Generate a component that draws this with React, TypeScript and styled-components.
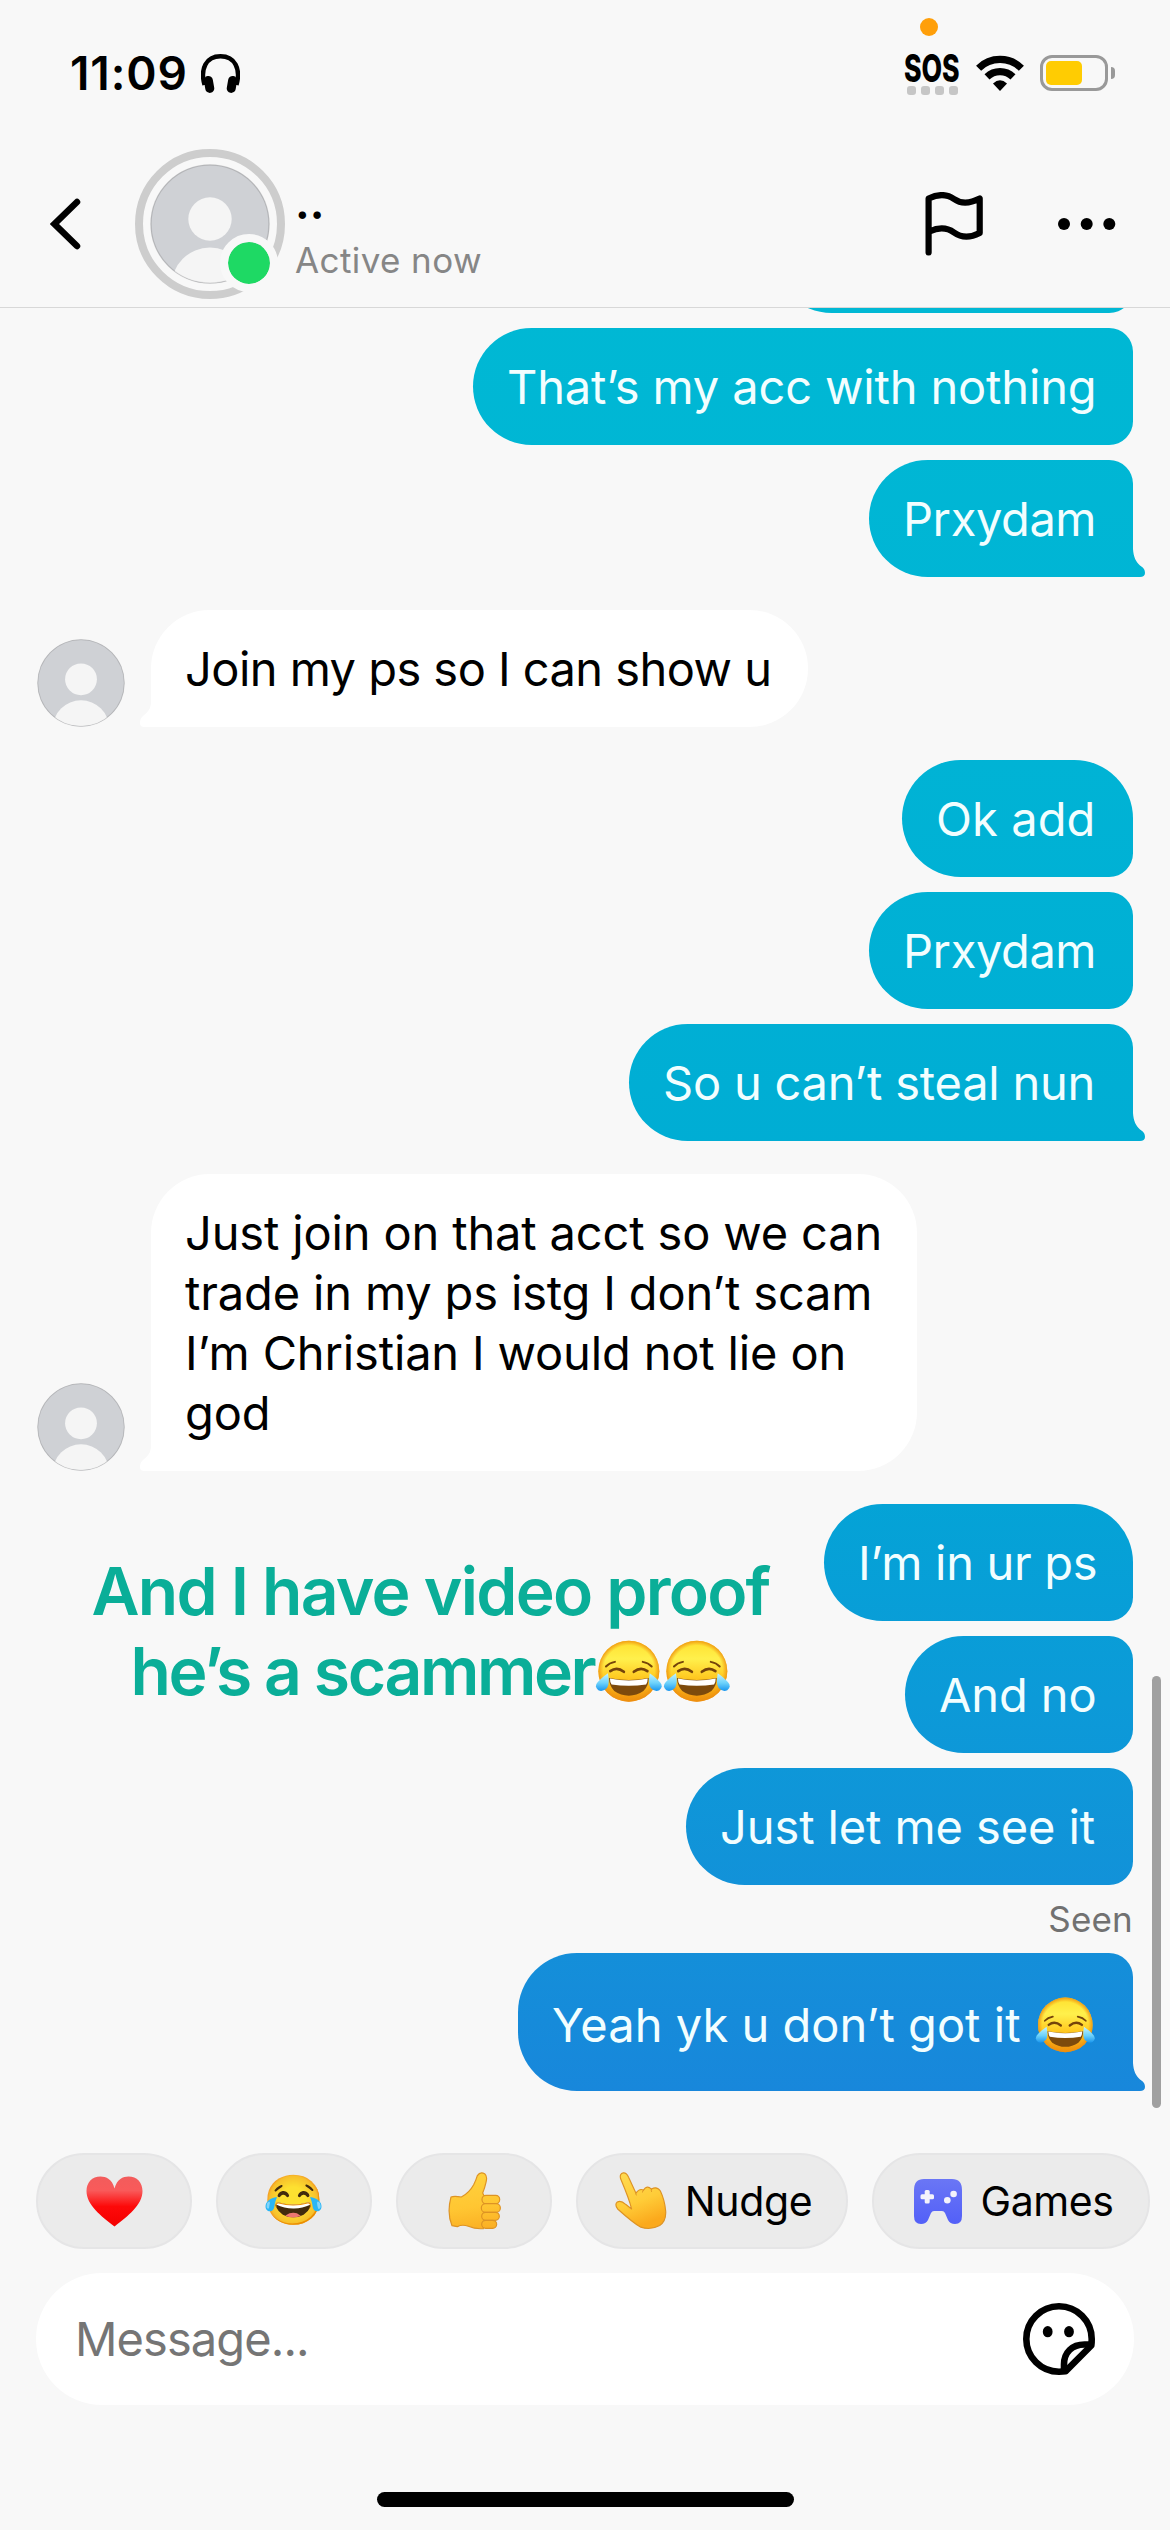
import React, { useId } from "react";
import styled, { createGlobalStyle, css } from "styled-components";

const GlobalStyle = createGlobalStyle`
  *, *::before, *::after { box-sizing: border-box; }
  body { margin: 0; background: #f8f8f8; }
`;

const Screen = styled.main`
  width: 1170px;
  height: 2530px;
  display: flex;
  flex-direction: column;
  overflow: hidden;
  background: #f8f8f8;
  color: #000;
  font-family: Inter, "Liberation Sans", sans-serif;
`;

/* ---------- status bar ---------- */

const StatusBar = styled.div`
  position: relative;
  flex: none;
  height: 148px;
  padding: 0 55px 2px 70px;
  display: flex;
  align-items: center;
  justify-content: space-between;
`;

const StatusGroup = styled.div<{ $gap: number }>`
  display: flex;
  align-items: center;
  gap: ${(p) => p.$gap}px;
`;

const Clock = styled.span`
  font-size: 46px;
  font-weight: 600;
  letter-spacing: 0.9px;
  line-height: 56px;
`;

const MicDot = styled.i`
  position: absolute;
  left: 920px;
  top: 18px;
  width: 18px;
  height: 18px;
  border-radius: 50%;
  background: #ff9f0a;
`;

const Sos = styled.div`
  width: 56px;
  display: flex;
  flex-direction: column;
  align-items: center;
  gap: 4px;
  padding-top: 2px;
`;

const SosText = styled.span`
  font-size: 38px;
  font-weight: 800;
  line-height: 28px;
  transform: scaleX(0.7);
`;

const SosBars = styled.div`
  display: flex;
  gap: 5px;
  i {
    width: 9px;
    height: 9px;
    border-radius: 3px;
    background: #c6c6c6;
  }
`;

const Battery = styled.div`
  display: flex;
  align-items: center;
  gap: 3px;
`;

const BatteryBody = styled.div`
  width: 68px;
  height: 36px;
  padding: 3px;
  border: 3px solid #999;
  border-radius: 12px;
`;

const BatteryFill = styled.div`
  width: 36px;
  height: 24px;
  border-radius: 5px;
  background: #ffcc02;
`;

const BatteryCap = styled.div`
  width: 4px;
  height: 12px;
  border-radius: 0 4px 4px 0;
  background: #999;
`;

/* ---------- header ---------- */

const Header = styled.header`
  flex: none;
  height: 160px;
  padding: 0 54px 7px 50px;
  display: flex;
  align-items: center;
  border-bottom: 1px solid #d8d8d8;
`;

const Back = styled.button`
  width: 85px;
  height: 52px;
  padding: 0;
  border: 0;
  background: none;
  display: flex;
`;

const Contact = styled.div`
  flex: 1;
  padding: 15px 0 0 10px;
  display: flex;
  flex-direction: column;
  gap: 11px;
`;

const ContactName = styled.strong`
  font-size: 44px;
  font-weight: 700;
  line-height: 50px;
  margin-top: -4px;
`;

const ContactState = styled.span`
  font-size: 35px;
  line-height: 42px;
  letter-spacing: 0.4px;
  color: #868686;
`;

const HeaderActions = styled.div`
  display: flex;
  align-items: center;
  gap: 73px;
`;

/* ---------- conversation ---------- */

const Conversation = styled.section`
  position: relative;
  flex: none;
  height: 1822px;
  padding: 0 37px 39px 37px;
  overflow: hidden;
  display: flex;
  flex-direction: column;
  justify-content: flex-end;
  gap: 33px;
`;

const Group = styled.div`
  flex: none;
  display: flex;
  flex-direction: column;
  align-items: flex-end;
  gap: 15px;
`;

const IncomingRow = styled.div`
  flex: none;
  display: flex;
  align-items: flex-end;
  gap: 26px;
`;

const outgoingFill = css`
  background: linear-gradient(
      to bottom,
      #00b8d4 300px,
      #00b4d5 700px,
      #00add4 1150px,
      #03a4d6 1480px,
      #0c9ad8 1700px,
      #148fd9 1950px,
      #1887db 2091px
    )
    fixed;
`;

const Bubble = styled.div<{ $width: number; $first?: boolean; $tail?: boolean; $tracking?: number }>`
  position: relative;
  width: ${(p) => p.$width}px;
  padding: 28.5px 0 28.5px 34px;
  font-size: 47px;
  line-height: 60px;
  letter-spacing: ${(p) => p.$tracking ?? 0}px;
  white-space: pre;
`;

const Outgoing = styled(Bubble)`
  ${outgoingFill}
  color: #f2feff;
  border-radius: 59px ${(p) => (p.$first ? 59 : 24)}px ${(p) => (p.$tail ? 0 : 24)}px 59px;
  ${(p) =>
    p.$tail &&
    css`
      &::after {
        content: "";
        position: absolute;
        right: -12px;
        bottom: 0;
        width: 15px;
        height: 30px;
        ${outgoingFill}
        clip-path: path("M0 0 L3 2 C3.5 10 6 15 10 18.5 C14 21 15 23 15 26 C15 28.500 13 30 10 30 L0 30 Z");
      }
    `}
`;

const Incoming = styled(Bubble)`
  background: #fff;
  border-radius: 59px 59px 59px 0;
  &::after {
    content: "";
    position: absolute;
    left: -11px;
    bottom: 0;
    width: 12px;
    height: 27px;
    background: #fff;
    clip-path: path("M12 0 L11 3 C10.500 9 8 12 3 16 C0 18.500 0 21 0 23.500 C0 26 2 27 4 27 L12 27 Z");
  }
`;

const EmojiBubble = styled(Outgoing)`
  height: 138px;
  padding: 42px 38px 0 34px;
  display: flex;
  align-items: flex-start;
  justify-content: space-between;
  svg { margin-top: 2px; }
`;

const Seen = styled.div`
  height: 38px;
  font-size: 35px;
  line-height: 38px;
  letter-spacing: 0.2px;
  color: #717171;
`;

const Caption = styled.div`
  position: absolute;
  left: 60px;
  top: 1243px;
  width: 741px;
  display: flex;
  flex-direction: column;
  align-items: center;
  color: #0aae98;
  font-size: 66px;
  font-weight: 600;
  line-height: 80px;
  white-space: nowrap;
`;

const CaptionLine = styled.div<{ $tracking: number }>`
  display: flex;
  align-items: center;
  letter-spacing: ${(p) => p.$tracking}px;
  svg { margin: 0 0 0 1px; }
`;

const ScrollThumb = styled.div`
  position: absolute;
  right: 9px;
  top: 1368px;
  width: 9px;
  height: 432px;
  border-radius: 5px;
  background: #a0a0a0;
`;

/* ---------- quick replies and composer ---------- */

const QuickReplies = styled.nav`
  flex: none;
  display: flex;
  gap: 24px;
  padding: 23px 0 24px 36px;
`;

const Chip = styled.button<{ $width: number; $inset?: number }>`
  flex: none;
  width: ${(p) => p.$width}px;
  height: 96px;
  padding: 0 0 0 ${(p) => p.$inset ?? 0}px;
  display: flex;
  align-items: center;
  justify-content: center;
  gap: 18px;
  border: 2px solid #e5e5e6;
  border-radius: 48px;
  background: #ebebeb;
  color: #000;
  font: 400 41px Inter, sans-serif;
  letter-spacing: -0.4px;
`;

const EmojiGlyph = styled.span`
  font: 49px "Noto Color Emoji", sans-serif;
  line-height: 60px;
`;

const Composer = styled.div`
  flex: none;
  height: 132px;
  margin: 0 36px;
  padding: 0 39px 0 39px;
  display: flex;
  align-items: center;
  justify-content: space-between;
  border-radius: 66px;
  background: #fff;
  color: #757575;
  font-size: 47px;
  letter-spacing: -0.9px;
  span { margin-top: -2px; }
`;

const HomeIndicator = styled.div`
  flex: none;
  align-self: center;
  width: 417px;
  height: 15px;
  margin-top: 87px;
  border-radius: 8px;
  background: #000;
`;

/* ---------- drawings ---------- */

function Headphones() {
  return (
    <svg width="39" height="39" viewBox="0 0 39 39">
      <path d="M3.500 31C-1 15 5 2.300 19.500 2.300S40 15 35.500 31" fill="none" stroke="#000" strokeWidth="4.400" />
      <rect x="3.500" y="22" width="9" height="17" rx="4.500" transform="rotate(-10 8 30)" />
      <rect x="26.500" y="22" width="9" height="17" rx="4.500" transform="rotate(10 31 30)" />
    </svg>
  );
}

function Wifi() {
  return (
    <svg width="48" height="36" viewBox="0 0 48 36">
      <g fill="none" stroke="#000" strokeWidth="7.200">
        <path d="M2.600 13.200A30.500 30.500 0 0 1 45.400 13.200" />
        <path d="M11 21.900A18.800 18.800 0 0 1 37 21.900" />
      </g>
      <path d="M24 36L17 28.500Q24 22 31 28.500Z" />
    </svg>
  );
}

function Avatar({ size }: { size: number }) {
  const clip = useId();
  return (
    <svg width={size} height={size} viewBox="0 0 120 120">
      <clipPath id={clip}>
        <circle cx="60" cy="60" r="59" />
      </clipPath>
      <circle cx="60" cy="60" r="59.500" fill="#c3c4c7" />
      <circle cx="60" cy="60" r="58.500" fill="#cfd1d5" />
      <g clipPath={`url(#${clip})`} fill="#f5f5f5">
        <circle cx="60" cy="55" r="21.700" />
        <circle cx="60" cy="122" r="38.500" />
      </g>
      <circle cx="60" cy="60" r="59" fill="none" stroke="#000" strokeOpacity=".08" strokeWidth="1.500" />
    </svg>
  );
}

const AvatarRing = styled.div`
  position: relative;
  flex: none;
  width: 150px;
  height: 150px;
  display: grid;
  place-items: center;
  border: 8px solid #cdcdcd;
  border-radius: 50%;
  &::after {
    content: "";
    position: absolute;
    left: 77px;
    top: 77px;
    width: 58px;
    height: 58px;
    border: 8px solid #f8f8f8;
    border-radius: 50%;
    background: #1ed964;
    background-clip: padding-box;
  }
`;

function Joy({ width }: { width: number }) {
  const id = useId();
  return (
    <svg width={width} height={width * 0.93} viewBox="14 26 202 188" role="img" aria-label="😂">
      <defs>
        <linearGradient id={id + "f"} x1="0" y1="0" x2="0" y2="1">
          <stop offset="0" stopColor="#ffe02e" />
          <stop offset=".3" stopColor="#fff04c" />
          <stop offset=".6" stopColor="#ffca22" />
          <stop offset="1" stopColor="#ee8c0a" />
        </linearGradient>
        <radialGradient id={id + "e"}>
          <stop offset=".84" stopColor="#f09a10" stopOpacity="0" />
          <stop offset="1" stopColor="#ee8e10" stopOpacity=".85" />
        </radialGradient>
        <linearGradient id={id + "t"} x1="0" y1="0" x2="0" y2="1">
          <stop offset="0" stopColor="#c5f4ff" />
          <stop offset=".55" stopColor="#6dd2fb" />
          <stop offset="1" stopColor="#1996ee" />
        </linearGradient>
      </defs>
      <circle cx="116" cy="120" r="92" fill={`url(#${id}f)`} />
      <circle cx="116" cy="120" r="92" fill={`url(#${id}e)`} />
      <path d="M56 141Q116 153 176 141Q176 165 160 180Q140 194 116 194T72 180Q57 165 56 141Z" fill="#7d4a0c" />
      <path d="M59 142Q116 154 173 142Q173 154 168 160Q116 168 64 160Q59 154 59 142Z" fill="#fff" />
      <g fill="none" stroke="#74430a" strokeLinecap="round">
        <path d="M47 106Q57 95 74 92M158 92Q175 95 185 106" strokeWidth="6" />
        <path d="M60 120Q80 105 101 122M131 122Q152 105 172 120" strokeWidth="8" />
      </g>
      <g fill={`url(#${id}t)`}>
        <path d="M53 126Q59 160 50 171Q38 184 24 178Q12 168 20 156Q30 142 53 126Z" />
        <path d="M179 126Q173 160 182 171Q194 184 208 178Q220 168 212 156Q202 142 179 126Z" />
      </g>
    </svg>
  );
}

function Heart() {
  return (
    <svg width="57" height="51" viewBox="0 0 57 51" role="img" aria-label="❤️">
      <linearGradient id="heart" x1="0" y1="0" x2="0" y2="1">
        <stop offset="0" stopColor="#f25c5c" />
        <stop offset=".28" stopColor="#f95a5a" />
        <stop offset=".6" stopColor="#fd0909" />
        <stop offset="1" stopColor="#f40000" />
      </linearGradient>
      <path
        d="M28.500 12.500C31 3 37 .5 42.500 .5C51 .5 56.500 6.500 56.500 15C56.500 29 42 40 28.500 50.500C15 40 .5 29 .5 15C.5 6.500 6 .5 14.500 .5C20 .5 26 3 28.500 12.500Z"
        fill="url(#heart)"
      />
    </svg>
  );
}

function ThumbsUp() {
  return (
    <svg width="53" height="58" viewBox="142 66 159 174" role="img" aria-label="👍">
      <linearGradient id="thumb" gradientUnits="userSpaceOnUse" x1="200" y1="70" x2="225" y2="238">
        <stop offset="0" stopColor="#ffd23e" />
        <stop offset=".6" stopColor="#ffc632" />
        <stop offset="1" stopColor="#fbb024" />
      </linearGradient>
      <g fill="url(#thumb)" stroke="#dd9324" strokeWidth="3.500" strokeLinejoin="round">
        <path d="M151 141Q160 137 182 141Q206 128 219 104Q227 88 230 77Q238 64 252 71Q261 78 256 97Q252 115 246 129L252 142L248 236Q225 238 203 229Q185 222 170 230L154 227Q138 190 151 141Z" />
        <rect x="244" y="136" width="53" height="25" rx="12" />
        <rect x="242" y="161" width="57" height="26" rx="12.500" />
        <rect x="243" y="187" width="53" height="24" rx="12" />
        <rect x="243" y="211" width="45" height="24" rx="12" />
      </g>
    </svg>
  );
}

function PointingHand() {
  return (
    <svg width="52" height="58" viewBox="648 66 157 174" role="img" aria-label="👆">
      <linearGradient id="hand" x1="0" y1="0" x2=".35" y2="1">
        <stop offset="0" stopColor="#ffdb52" />
        <stop offset=".6" stopColor="#ffcc38" />
        <stop offset="1" stopColor="#fba91c" />
      </linearGradient>
      <path
        d="M665 86Q661 70 673 68Q683 67 689 81L711 129Q722 114 734 120Q744 104 758 117Q775 107 785 123Q798 150 801 183Q803 213 783 227Q755 242 726 232Q705 221 656 177Q646 163 655 156Q666 150 680 163L698 177Q692 150 665 86Z"
        fill="url(#hand)"
        stroke="#dd9324"
        strokeWidth="3.500"
        strokeLinejoin="round"
      />
      <path d="M711 128Q710 132 712 135M734 120Q731 123 731 126M758 117Q757 121 758 124" fill="none" stroke="#dd9324" strokeWidth="3" strokeLinecap="round" />
    </svg>
  );
}

function Gamepad() {
  return (
    <svg width="48" height="45" viewBox="0 0 48 45">
      <linearGradient id="pad" x1="0" y1="0" x2="0" y2="1">
        <stop offset="0" stopColor="#6a76f5" />
        <stop offset="1" stopColor="#5360f8" />
      </linearGradient>
      <path
        d="M10 0H38Q48 0 48 11V37Q48 45 41 45Q36 45 34 41L31 34Q30 32 28 32H20Q18 32 17 34L14 41Q12 45 7 45Q0 45 0 37V11Q0 0 10 0Z"
        fill="url(#pad)"
      />
      <g fill="#f3f3fb">
        <rect x="10.700" y="11" width="5" height="13.500" rx="1.500" />
        <rect x="6.500" y="15.200" width="13.500" height="5" rx="1.500" />
        <circle cx="33.300" cy="21.300" r="3.300" />
        <circle cx="39.600" cy="15" r="3.300" />
      </g>
    </svg>
  );
}

function StickerIcon() {
  return (
    <svg width="72" height="72" viewBox="0 0 72 72">
      <g fill="none" stroke="#000" strokeWidth="6.600" strokeLinejoin="round" strokeLinecap="round">
        <path d="M68.300 42.500C68.600 40.500 68.700 38 68.700 36A32.700 32.700 0 1 0 36 68.700C38 68.700 40.500 68.600 42.500 68.300Z" />
        <path d="M67 41.500H61.500C49 41.500 41 49.500 41 61.500V67" />
      </g>
      <ellipse cx="24.700" cy="28.700" rx="4.900" ry="5.600" />
      <ellipse cx="46" cy="28.700" rx="4.900" ry="5.600" />
    </svg>
  );
}

/* ---------- page ---------- */

export default function App() {
  return (
    <>
      <GlobalStyle />
      <Screen>
        <StatusBar>
          <StatusGroup $gap={13}>
            <Clock>11:09</Clock>
            <Headphones />
          </StatusGroup>
          <MicDot />
          <StatusGroup $gap={16}>
            <Sos>
              <SosText>SOS</SosText>
              <SosBars>
                <i />
                <i />
                <i />
                <i />
              </SosBars>
            </Sos>
            <Wifi />
            <Battery>
              <BatteryBody>
                <BatteryFill />
              </BatteryBody>
              <BatteryCap />
            </Battery>
          </StatusGroup>
        </StatusBar>

        <Header>
          <Back aria-label="Back">
            <svg width="32" height="52" viewBox="0 0 32 52">
              <path d="M27 4L4.500 26L27 48" fill="none" stroke="#000" strokeWidth="6.500" strokeLinecap="round" strokeLinejoin="miter" />
            </svg>
          </Back>
          <AvatarRing>
            <Avatar size={120} />
          </AvatarRing>
          <Contact>
            <ContactName>..</ContactName>
            <ContactState>Active now</ContactState>
          </Contact>
          <HeaderActions>
            <svg width="60" height="64" viewBox="0 0 60 64">
              <path
                d="M3.600 60.500V6.500C13 2 22 2 29 7C36 12 45 11.500 54.700 6.500V41C45 46 36 45.500 29 40.500C22 35.500 13 35.500 4.500 39.500"
                fill="none"
                stroke="#000"
                strokeWidth="6.200"
                strokeLinecap="round"
                strokeLinejoin="round"
              />
            </svg>
            <svg width="58" height="12" viewBox="0 0 58 12">
              <circle cx="6" cy="6" r="6" />
              <circle cx="28.700" cy="6" r="6" />
              <circle cx="51.300" cy="6" r="6" />
            </svg>
          </HeaderActions>
        </Header>

        <Conversation>
          <Group>
            <Outgoing $width={360}> </Outgoing>
            <Outgoing $width={660} $tracking={-0.15}>That’s my acc with nothing</Outgoing>
            <Outgoing $width={264} $tail $tracking={-0.4}>Prxydam</Outgoing>
          </Group>
          <IncomingRow>
            <Avatar size={88} />
            <Incoming $width={657} $tracking={-0.54}>Join my ps so I can show u</Incoming>
          </IncomingRow>
          <Group>
            <Outgoing $width={231} $first $tracking={0.1}>Ok add</Outgoing>
            <Outgoing $width={264} $tracking={-0.4}>Prxydam</Outgoing>
            <Outgoing $width={504} $tail $tracking={-0.22}>So u can’t steal nun</Outgoing>
          </Group>
          <IncomingRow>
            <Avatar size={88} />
            <Incoming $width={766} $tracking={-0.15}>
              {"Just join on that acct so we can\ntrade in my ps istg I don’t scam\nI’m Christian I would not lie on\ngod"}
            </Incoming>
          </IncomingRow>
          <Group>
            <Outgoing $width={309} $first $tracking={-0.3}>I’m in ur ps</Outgoing>
            <Outgoing $width={228} $tracking={-0.1}>And no</Outgoing>
            <Outgoing $width={447} $tracking={-0.1}>Just let me see it</Outgoing>
            <Seen>Seen</Seen>
            <EmojiBubble $width={615} $tail $tracking={0.03}>
              <span>Yeah yk u don’t got it</span>
              <Joy width={60} />
            </EmojiBubble>
          </Group>
          <Caption>
            <CaptionLine $tracking={-1.75}>And I have video proof</CaptionLine>
            <CaptionLine $tracking={-2.4}>
              he’s a scammer
              <Joy width={67} />
              <Joy width={67} />
            </CaptionLine>
          </Caption>
          <ScrollThumb />
        </Conversation>

        <QuickReplies>
          <Chip $width={156}>
            <Heart />
          </Chip>
          <Chip $width={156}>
            <EmojiGlyph>😂</EmojiGlyph>
          </Chip>
          <Chip $width={156}>
            <ThumbsUp />
          </Chip>
          <Chip $width={272} $inset={3}>
            <PointingHand />
            Nudge
          </Chip>
          <Chip $width={278} $inset={6}>
            <Gamepad />
            Games
          </Chip>
        </QuickReplies>

        <Composer>
          <span>Message...</span>
          <StickerIcon />
        </Composer>
        <HomeIndicator />
      </Screen>
    </>
  );
}
